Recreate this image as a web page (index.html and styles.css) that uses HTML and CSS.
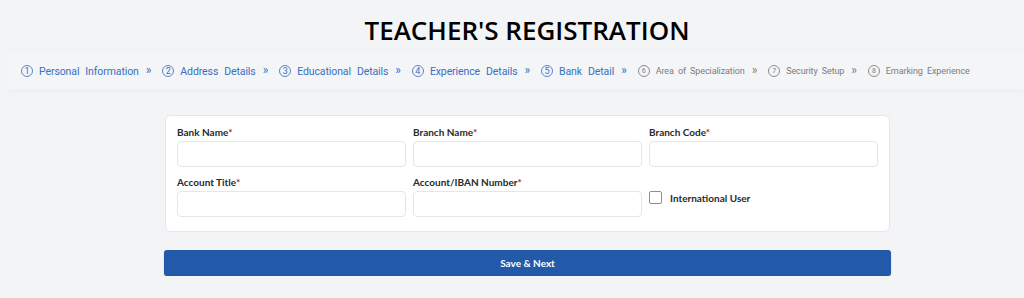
FILE: index.html
```html
<!DOCTYPE html>
<html lang="en">
<head>
    <meta charset="UTF-8">
    <meta name="viewport" content="width=device-width, initial-scale=1.0">
    <title>Teacher's Registration</title>
    <link rel="stylesheet" href="styles.css">
</head>
<body>
    <div class="page-head">
        <h1 class="page-title">TEACHER'S REGISTRATION</h1>
    </div>

    <div class="steps-bar">
        <div class="step step-done"><span class="step-num">1</span><span class="step-name">Personal Information</span><span class="step-arrow">&raquo;</span></div>
        <div class="step step-done"><span class="step-num">2</span><span class="step-name">Address Details</span><span class="step-arrow">&raquo;</span></div>
        <div class="step step-done"><span class="step-num">3</span><span class="step-name">Educational Details</span><span class="step-arrow">&raquo;</span></div>
        <div class="step step-done"><span class="step-num">4</span><span class="step-name">Experience Details</span><span class="step-arrow">&raquo;</span></div>
        <div class="step step-done"><span class="step-num">5</span><span class="step-name">Bank Detail</span><span class="step-arrow">&raquo;</span></div>
        <div class="step"><span class="step-num">6</span><span class="step-name">Area of Specialization</span><span class="step-arrow">&raquo;</span></div>
        <div class="step"><span class="step-num">7</span><span class="step-name">Security Setup</span><span class="step-arrow">&raquo;</span></div>
        <div class="step"><span class="step-num">8</span><span class="step-name">Emarking Experience</span></div>
    </div>

    <div class="form-wrapper">
        <div class="form-card">
            <div class="form-grid">
                <div class="field">
                    <label class="field-label">Bank Name<span class="req">*</span></label>
                    <input class="field-input" type="text">
                </div>
                <div class="field">
                    <label class="field-label">Branch Name<span class="req">*</span></label>
                    <input class="field-input" type="text">
                </div>
                <div class="field">
                    <label class="field-label">Branch Code<span class="req">*</span></label>
                    <input class="field-input" type="text">
                </div>
                <div class="field">
                    <label class="field-label">Account Title<span class="req">*</span></label>
                    <input class="field-input" type="text">
                </div>
                <div class="field">
                    <label class="field-label">Account/IBAN Number<span class="req">*</span></label>
                    <input class="field-input" type="text">
                </div>
                <div class="field field-check">
                    <label class="check-label"><span class="check-box"></span>International User</label>
                </div>
            </div>
        </div>
        <button class="save-button">Save &amp; Next</button>
    </div>
</body>
</html>
```

FILE: styles.css
```css
* {
    box-sizing: border-box;
    margin: 0;
    padding: 0;
}

body {
    margin: 0 0 0 8px;
    background-color: #f3f4f6;
    font-family: 'Lato', sans-serif;
    color: #222;
}

.page-head {
    width: 726px;
    margin-left: 156px;
    padding-top: 12px;
    height: 52px;
    text-align: center;
}

.page-title {
    font-family: 'Open Sans', sans-serif;
    font-size: 26px;
    font-weight: 600;
    line-height: 36px;
    color: #000;
}

.steps-bar {
    display: flex;
    align-items: center;
    height: 38px;
    padding-left: 13px;
    background-color: #f4f5f7;
    box-shadow: 0 1px 3px rgba(0, 0, 0, 0.05);
    font-family: 'Roboto', sans-serif;
    white-space: nowrap;
}

.step {
    display: flex;
    align-items: center;
    flex-shrink: 0;
    margin-right: 11px;
    color: #7a7d82;
    font-size: 9px;
    letter-spacing: -0.1px;
}

.step-num {
    width: 12px;
    height: 12px;
    border: 1px solid #8a8d92;
    border-radius: 50%;
    display: flex;
    align-items: center;
    justify-content: center;
    font-size: 7px;
    letter-spacing: 0;
    margin-right: 6px;
}

.step-name {
    word-spacing: 2px;
}

.step-arrow {
    margin-left: 7px;
    font-size: 12px;
    line-height: 1;
    position: relative;
    top: -1px;
}

.step-done {
    color: #3a6fc2;
    font-size: 10.5px;
    letter-spacing: -0.1px;
}

.step-done .step-num {
    border-color: #5a86cc;
    font-size: 9px;
}

.step-done .step-name {
    word-spacing: 3.5px;
}

.form-wrapper {
    width: 726px;
    margin-left: 156px;
    padding-top: 25px;
}

.form-card {
    background-color: #fff;
    border: 1px solid #e4e7eb;
    border-radius: 6px;
    padding: 9px 11px 14px 11px;
    margin-left: 1px;
}

.form-grid {
    display: grid;
    grid-template-columns: repeat(3, 229px);
    column-gap: 7px;
    row-gap: 8px;
}

.field {
    display: flex;
    flex-direction: column;
}

.field-label {
    font-size: 10px;
    font-weight: 700;
    color: #2a2a2a;
    line-height: 14px;
    margin-bottom: 2px;
}

.req {
    color: #a52a2a;
}

.field-input {
    height: 26px;
    border: 1px solid #e3e6ea;
    border-radius: 4px;
    background: #fff;
    outline: none;
}

.field-check {
    justify-content: flex-start;
    padding-top: 16px;
}

.check-label {
    display: flex;
    align-items: center;
    font-size: 10px;
    font-weight: 700;
    color: #2a2a2a;
}

.check-box {
    width: 13px;
    height: 13px;
    border: 1px solid #8a8d92;
    border-radius: 2px;
    margin-right: 8px;
    background: #fff;
}

.save-button {
    display: block;
    width: 727px;
    height: 26px;
    margin-top: 18px;
    background-color: #2259a9;
    color: #fff;
    border: none;
    border-radius: 3px;
    font-family: 'Lato', sans-serif;
    font-size: 10px;
    font-weight: 700;
    box-shadow: 0 1px 2px rgba(0, 0, 0, 0.15);
}
```
